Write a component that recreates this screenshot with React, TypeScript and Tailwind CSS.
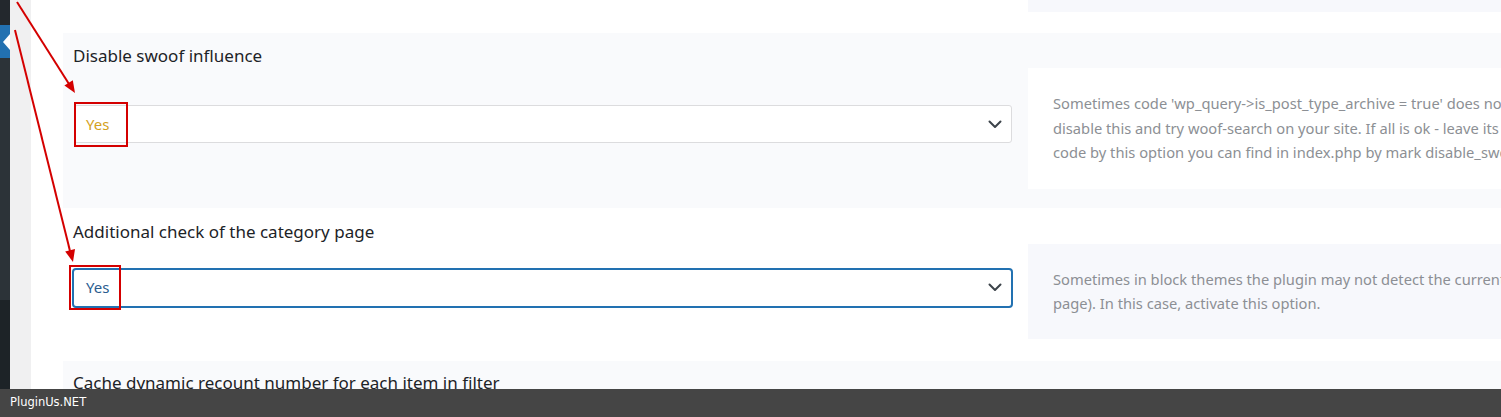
import React from 'react';

const Chevron: React.FC = () => (
  <svg width="14" height="9" viewBox="0 0 14 9" fill="none" className="shrink-0">
    <path d="M1.5 1.5l5.5 5.5 5.5-5.5" stroke="#3c434a" strokeWidth="2" strokeLinecap="round" strokeLinejoin="round" />
  </svg>
);

const App: React.FC = () => {
  return (
    <div className="relative w-[1501px] h-[417px] overflow-hidden flex bg-white font-['Noto_Sans',sans-serif]">
      {/* WP admin menu edge */}
      <div className="w-[10px] shrink-0 flex flex-col">
        <div className="h-[25px] bg-[#23282d]" />
        <div className="h-[33px] bg-[#2271b1] flex items-center justify-end">
          <div className="w-0 h-0 border-y-[8px] border-y-transparent border-r-[7px] border-r-white" />
        </div>
        <div className="h-[242px] bg-[#2c3338]" />
        <div className="flex-1 bg-[#1d2327]" />
      </div>
      <div className="w-[21px] shrink-0 bg-[#f0f0f1]" />

      {/* Settings */}
      <div className="flex-1 min-w-0 overflow-hidden pl-[32px]">
        {/* tail of previous option */}
        <div className="h-[33px] flex">
          <div className="w-[965px] shrink-0" />
          <div className="w-[700px] shrink-0 h-[12px] bg-[#f7f8fc]" />
        </div>

        {/* Disable swoof influence */}
        <div className="flex bg-[#f9fafc] pl-[10px] pt-[12px] pb-[19px]">
          <div className="w-[939px] shrink-0 flex flex-col">
            <div className="h-[22px] leading-[22px] text-[17px] text-[#1d2327] whitespace-nowrap">Disable swoof influence</div>
            <div className="mt-[38px] ml-[1px] w-[938px] h-[38px] bg-white border border-[#dcdcde] rounded-[3px] flex items-center justify-between pl-[11px] pr-[9px]">
              <span className="text-[15px] text-[#d4a21c]">Yes</span>
              <Chevron />
            </div>
          </div>
          <div className="ml-[16px] mt-[23px] w-[700px] shrink-0 bg-white pl-[25px] pt-[23px] pb-[24px] text-[14.7px] leading-[24.5px] text-[#8c8f94] whitespace-nowrap">
            <div>Sometimes code 'wp_query-&gt;is_post_type_archive = true' does not work properly in some themes, in this case</div>
            <div>disable this and try woof-search on your site. If all is ok - leave its enabled. The</div>
            <div>code by this option you can find in index.php by mark disable_swoof_influence</div>
          </div>
        </div>

        {/* Additional check of the category page */}
        <div className="flex bg-white pl-[10px] pt-[13px] pb-[22px]">
          <div className="w-[939px] shrink-0 flex flex-col">
            <div className="h-[22px] leading-[22px] text-[17px] text-[#1d2327] whitespace-nowrap">Additional check of the category page</div>
            <div className="mt-[25px] -ml-[1px] w-[941px] h-[40px] bg-white border-2 border-[#2271b1] rounded-[4px] flex items-center justify-between pl-[12px] pr-[9px]">
              <span className="text-[15px] text-[#2b5c8f]">Yes</span>
              <Chevron />
            </div>
          </div>
          <div className="ml-[16px] mt-[23px] w-[700px] shrink-0 bg-[#f7f8fc] pl-[25px] pt-[23px] pb-[23px] text-[14.7px] leading-[24.5px] text-[#8c8f94] whitespace-nowrap">
            <div>Sometimes in block themes the plugin may not detect the current category page (or tag</div>
            <div>page). In this case, activate this option.</div>
          </div>
        </div>

        {/* Cache dynamic recount */}
        <div className="flex bg-[#f9fafc] pl-[10px] pt-[11px] h-[120px]">
          <div className="h-[22px] leading-[22px] text-[17px] text-[#1d2327] whitespace-nowrap">Cache dynamic recount number for each item in filter</div>
        </div>
      </div>

      {/* annotations */}
      <div className="absolute left-[74px] top-[102px] w-[54px] h-[45px] border-2 border-[#d40000] pointer-events-none" />
      <div className="absolute left-[69px] top-[265px] w-[52px] h-[45px] border-2 border-[#d40000] pointer-events-none" />
      <svg className="absolute left-0 top-0 pointer-events-none" width="1501" height="417">
        <line x1="17" y1="2" x2="69" y2="84" stroke="#d40000" strokeWidth="2" />
        <polygon points="75,93 64.4,85.6 72.8,80.2" fill="#d40000" />
        <line x1="15" y1="30" x2="70" y2="251" stroke="#d40000" strokeWidth="2" />
        <polygon points="73,262 65.2,251.5 75,249.1" fill="#d40000" />
      </svg>

      {/* watermark bar */}
      <div className="absolute left-0 right-0 bottom-0 h-[28px] bg-[#454545] flex items-center pl-[10px]">
        <span className="text-[11.5px] text-white font-['DejaVu_Sans',sans-serif]">PluginUs.NET</span>
      </div>
    </div>
  );
};

export default App;
